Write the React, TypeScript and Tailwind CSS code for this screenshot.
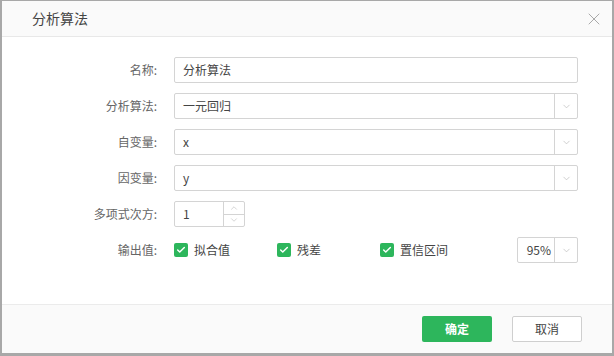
import { Check, ChevronDown, ChevronUp, X } from 'lucide-react';

const font = { fontFamily: '"Noto Sans CJK SC", "Liberation Sans", sans-serif' };

function Label({ text }: { text: string }) {
  return <div className="w-[156px] shrink-0 pr-[1px] text-right text-[12px] text-[#666]">{text}</div>;
}

function Select({ value }: { value: string }) {
  return (
    <div className="flex h-[26px] w-[404px] items-stretch rounded-[2px] border border-[#d4d4d4] bg-white">
      <div className="flex flex-1 items-center pl-[8px] text-[12px] text-[#444]">{value}</div>
      <div className="flex w-[23px] items-center justify-center border-l border-[#d4d4d4]">
        <ChevronDown className="size-[11px] text-[#bbb]" strokeWidth={1.5} />
      </div>
    </div>
  );
}

function CheckItem({ text }: { text: string }) {
  return (
    <div className="flex w-[103px] items-center">
      <div className="flex size-[14px] items-center justify-center rounded-[2px] bg-[#2db65c]">
        <Check className="size-[10px] text-white" strokeWidth={3.5} />
      </div>
      <span className="ml-[6px] text-[12px] text-[#444]">{text}</span>
    </div>
  );
}

export default function App() {
  return (
    <div
      className="h-[356px] w-[614px] border-t border-r-2 border-b-[3px] border-l-2 border-[#a8a8a8] bg-white"
      style={font}
    >
      <div className="flex h-full flex-col">
        <div className="flex h-[36px] shrink-0 items-center justify-between border-b border-[#e8e8e8] bg-[#fafafa] pl-[30px] pr-[8px]">
          <span className="text-[14px] text-[#444]">分析算法</span>
          <X className="size-[20px] text-[#999]" strokeWidth={1} />
        </div>

        <div className="flex flex-1 flex-col gap-[10px] pt-[20px]">
          <div className="flex items-center gap-[16px]">
            <Label text="名称:" />
            <div className="flex h-[26px] w-[404px] items-center rounded-[2px] border border-[#d4d4d4] bg-white pl-[8px] text-[12px] text-[#444]">
              分析算法
            </div>
          </div>
          <div className="flex items-center gap-[16px]">
            <Label text="分析算法:" />
            <Select value="一元回归" />
          </div>
          <div className="flex items-center gap-[16px]">
            <Label text="自变量:" />
            <Select value="x" />
          </div>
          <div className="flex items-center gap-[16px]">
            <Label text="因变量:" />
            <Select value="y" />
          </div>
          <div className="flex items-center gap-[16px]">
            <Label text="多项式次方:" />
            <div className="flex h-[26px] w-[71px] items-stretch rounded-[2px] border border-[#d4d4d4] bg-white">
              <div className="flex flex-1 items-center pl-[8px] text-[12px] text-[#444]">1</div>
              <div className="flex w-[21px] flex-col border-l border-[#d4d4d4]">
                <div className="flex flex-1 items-center justify-center border-b border-[#d4d4d4]">
                  <ChevronUp className="size-[10px] text-[#bbb]" strokeWidth={1.5} />
                </div>
                <div className="flex flex-1 items-center justify-center">
                  <ChevronDown className="size-[10px] text-[#bbb]" strokeWidth={1.5} />
                </div>
              </div>
            </div>
          </div>
          <div className="flex items-center gap-[16px]">
            <Label text="输出值:" />
            <div className="flex w-[404px] items-center">
              <CheckItem text="拟合值" />
              <CheckItem text="残差" />
              <CheckItem text="置信区间" />
              <div className="ml-auto flex h-[26px] w-[61px] items-stretch rounded-[2px] border border-[#d4d4d4] bg-white">
                <div className="flex flex-1 items-center justify-end pr-[3px] text-[12px] text-[#444]">95%</div>
                <div className="flex w-[23px] items-center justify-center border-l border-[#d4d4d4]">
                  <ChevronDown className="size-[11px] text-[#bbb]" strokeWidth={1.5} />
                </div>
              </div>
            </div>
          </div>
        </div>

        <div className="flex h-[49px] shrink-0 items-center justify-end gap-[20px] border-t border-[#ebebeb] bg-[#fafafa] pr-[30px]">
          <button className="h-[26px] w-[70px] rounded-[2px] bg-[#2db65c] text-[12px] font-bold text-white">确定</button>
          <button className="h-[26px] w-[70px] rounded-[2px] border border-[#cfcfcf] bg-white text-[12px] text-[#444]">取消</button>
        </div>
      </div>
    </div>
  );
}
